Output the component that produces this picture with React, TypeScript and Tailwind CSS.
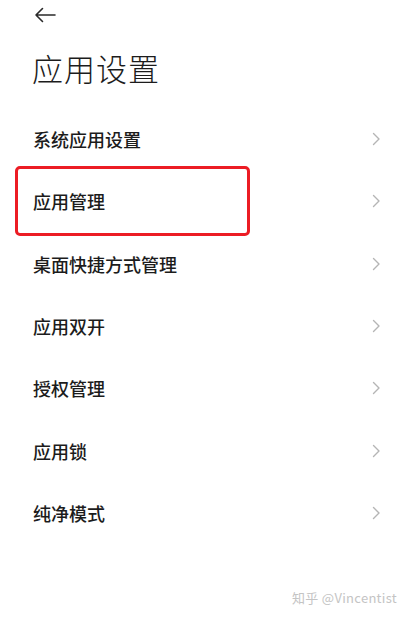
const items = ['系统应用设置', '应用管理', '桌面快捷方式管理', '应用双开', '授权管理', '应用锁', '纯净模式']

function Chevron() {
  return (
    <svg width="9" height="14" viewBox="0 0 9 14" fill="none" className="shrink-0">
      <path d="M1.5 1.5 L7 7 L1.5 12.5" stroke="#b5b5b5" strokeWidth="1.4" strokeLinecap="round" strokeLinejoin="round" />
    </svg>
  )
}

export default function App() {
  return (
    <div
      className="relative w-[408px] h-[617px] bg-white overflow-hidden text-[#1c1c1c]"
      style={{ fontFamily: '"Noto Sans CJK SC", "Noto Sans", sans-serif' }}
    >
      {/* back */}
      <div className="pl-[34px] pt-[7px] h-[40px]">
        <svg width="22" height="16" viewBox="0 0 22 16" fill="none">
          <path d="M21 8 H2 M8.5 1.5 L2 8 L8.5 14.5" stroke="#2a2a2a" strokeWidth="1.6" strokeLinecap="round" strokeLinejoin="round" />
        </svg>
      </div>

      <h1 className="pl-[32px] pt-[6px] h-[69px] text-[31px] font-light leading-[44px] tracking-[1px]">应用设置</h1>

      <ul className="-mt-[1px]">
        {items.map((t, i) => (
          <li key={t} className="relative flex items-center justify-between h-[62.3px] pl-[33px] pr-[27px]">
            <span className="text-[18px] font-medium leading-none">{t}</span>
            <Chevron />
            {i === 1 && (
              <div className="absolute left-[15px] top-[-4px] w-[235px] h-[70px] border-[3px] border-[#ec1c24] rounded-[5px]" />
            )}
          </li>
        ))}
      </ul>

      <div className="absolute right-[11px] bottom-[10px] text-[13px] text-[#c4c4c4] tracking-[0.3px]">
        知乎 @Vincentist
      </div>
    </div>
  )
}
